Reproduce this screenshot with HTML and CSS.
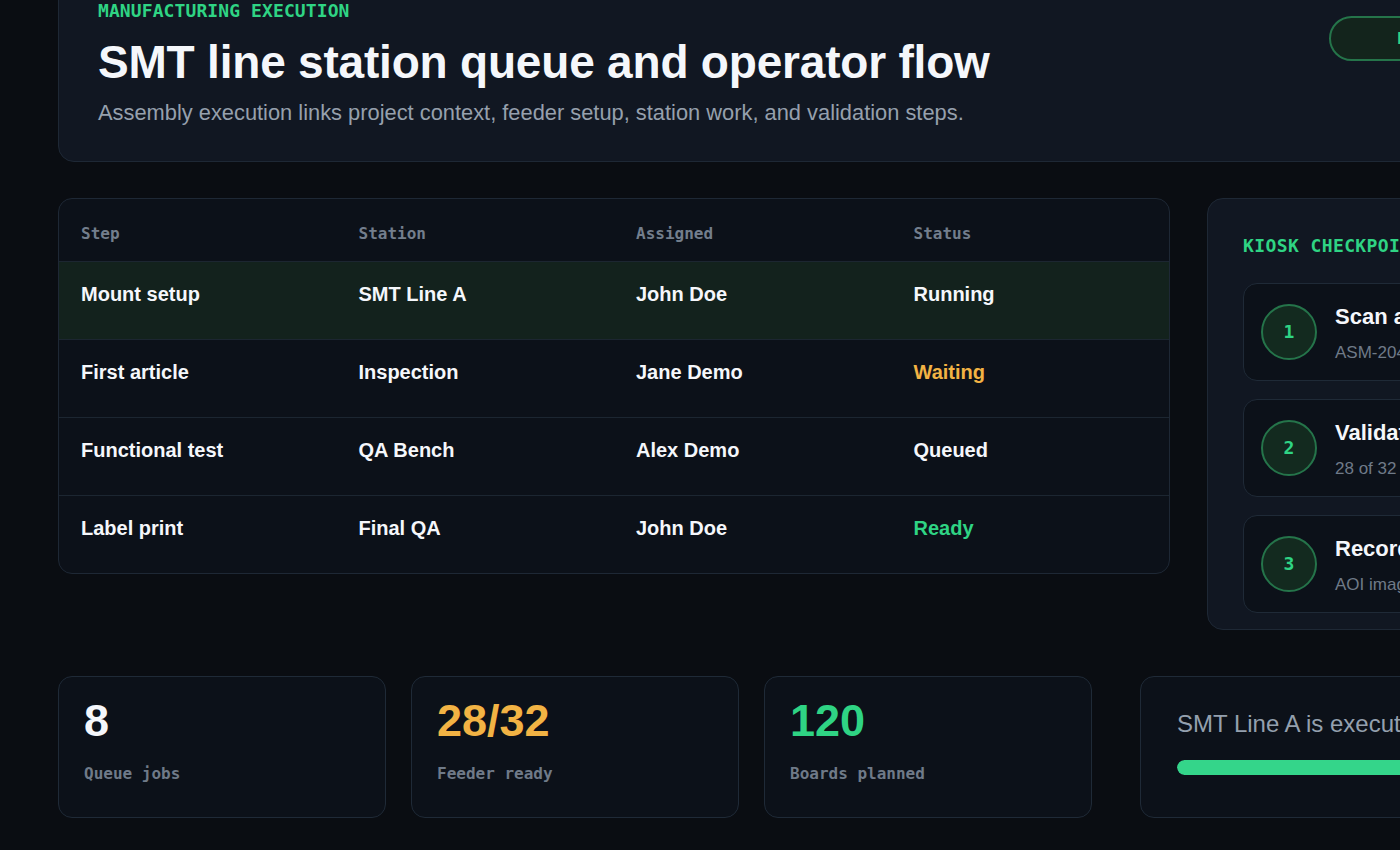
FILE: index.html
```html
<!DOCTYPE html>
<html lang="en">
<head>
<meta charset="utf-8">
<title>SMT line station queue</title>
<link rel="stylesheet" href="styles.css">
</head>
<body>
<div class="page">
  <header class="hero">
    <div class="hero-text">
      <div class="eyebrow">MANUFACTURING EXECUTION</div>
      <h1 class="title">SMT line station queue and operator flow</h1>
      <p class="subtitle">Assembly execution links project context, feeder setup, station work, and validation steps.</p>
    </div>
    <div class="pill">RUNNING</div>
  </header>

  <section class="main">
    <div class="table-card">
      <table class="queue">
        <thead>
          <tr><th>Step</th><th>Station</th><th>Assigned</th><th>Status</th></tr>
        </thead>
        <tbody>
          <tr class="active"><td>Mount setup</td><td>SMT Line A</td><td>John Doe</td><td>Running</td></tr>
          <tr><td>First article</td><td>Inspection</td><td>Jane Demo</td><td class="warn">Waiting</td></tr>
          <tr><td>Functional test</td><td>QA Bench</td><td>Alex Demo</td><td>Queued</td></tr>
          <tr><td>Label print</td><td>Final QA</td><td>John Doe</td><td class="ok">Ready</td></tr>
        </tbody>
      </table>
    </div>

    <aside class="kiosk">
      <div class="kiosk-title">KIOSK CHECKPOINTS</div>
      <div class="checks">
        <div class="check">
          <div class="num">1</div>
          <div class="check-text">
            <div class="check-title">Scan assembly traveler</div>
            <div class="check-sub">ASM-2041 · Rev C</div>
          </div>
        </div>
        <div class="check">
          <div class="num">2</div>
          <div class="check-text">
            <div class="check-title">Validate feeders</div>
            <div class="check-sub">28 of 32 confirmed</div>
          </div>
        </div>
        <div class="check">
          <div class="num">3</div>
          <div class="check-text">
            <div class="check-title">Record inspection</div>
            <div class="check-sub">AOI image required</div>
          </div>
        </div>
      </div>
    </aside>
  </section>

  <section class="bottom">
    <div class="stats">
      <div class="stat">
        <div class="stat-value">8</div>
        <div class="stat-label">Queue jobs</div>
      </div>
      <div class="stat">
        <div class="stat-value amber">28/32</div>
        <div class="stat-label">Feeder ready</div>
      </div>
      <div class="stat">
        <div class="stat-value green">120</div>
        <div class="stat-label">Boards planned</div>
      </div>
    </div>
    <div class="progress-card">
      <div class="progress-text">SMT Line A is executing</div>
      <div class="track"><div class="fill" style="width: 78%"></div></div>
    </div>
  </section>
</div>
</body>
</html>
```

FILE: styles.css
```css
html, body {
  margin: 0;
  padding: 0;
  overflow: hidden;
  background: #0a0d12;
}

body {
  font-family: "Liberation Sans", Arial, sans-serif;
  color: #f5f7fb;
}

.page {
  width: 1512px;
  margin-top: -40px;
  padding-left: 58px;
  display: flex;
  flex-direction: column;
}

/* Hero */
.hero {
  background: #111722;
  border: 1px solid #1e2835;
  border-radius: 16px;
  padding: 39px 40px 33px 39px;
  display: flex;
  justify-content: space-between;
  align-items: flex-start;
}

.eyebrow {
  font-family: "DejaVu Sans Mono", monospace;
  font-weight: 700;
  font-size: 18px;
  line-height: 21.6px;
  letter-spacing: 0.1px;
  color: #2fd484;
}

.title {
  margin: 15px 0 11px;
  font-size: 46px;
  line-height: 50.6px;
  font-weight: 700;
  letter-spacing: -0.2px;
  color: #f5f7fb;
}

.subtitle {
  margin: 0;
  font-size: 21.85px;
  line-height: 30px;
  color: #96a0ad;
}

.pill {
  margin-top: 16px;
  height: 45px;
  box-sizing: border-box;
  min-width: 200px;
  padding-left: 4px;
  border: 2px solid #25744a;
  background: #13241c;
  border-radius: 999px;
  display: flex;
  align-items: center;
  justify-content: center;
  font-family: "DejaVu Sans Mono", monospace;
  font-weight: 700;
  font-size: 16px;
  color: #2fd484;
}

/* Main grid */
.main {
  margin-top: 36px;
  display: grid;
  grid-template-columns: 1112px 363px;
  column-gap: 37px;
  align-items: start;
}

.table-card {
  background: #0c1119;
  border: 1px solid #1e2835;
  border-radius: 14px;
  overflow: hidden;
}

.queue {
  width: 100%;
  border-collapse: collapse;
  table-layout: fixed;
}

.queue th {
  height: 62px;
  box-sizing: border-box;
  padding: 8px 22px 0;
  text-align: left;
  font-family: "DejaVu Sans Mono", monospace;
  font-weight: 700;
  font-size: 16px;
  color: #737e8c;
  border-bottom: 1px solid #1c2631;
}

.queue td {
  height: 78px;
  box-sizing: border-box;
  padding: 17px 22px 0;
  vertical-align: top;
  font-size: 20px;
  line-height: 30px;
  font-weight: 700;
  color: #f5f7fb;
  border-bottom: 1px solid #1c2631;
}

.queue tbody tr:last-child td {
  border-bottom: none;
}

.queue tr.active td {
  background: #13221d;
}

.queue td.warn { color: #f2b344; }
.queue td.ok { color: #2fd484; }

/* Kiosk */
.kiosk {
  background: #111722;
  border: 1px solid #1e2835;
  border-radius: 16px;
  padding: 36px 35px 16px;
}

.kiosk-title {
  font-family: "DejaVu Sans Mono", monospace;
  font-weight: 700;
  font-size: 18px;
  line-height: 21.6px;
  letter-spacing: 0.4px;
  color: #2fd484;
  white-space: nowrap;
}

.checks {
  margin-top: 26px;
  display: flex;
  flex-direction: column;
  gap: 18px;
}

.check {
  height: 98px;
  box-sizing: border-box;
  background: #0c1119;
  border: 1px solid #1f2a37;
  border-radius: 14px;
  padding: 0 17px;
  display: flex;
  align-items: center;
  gap: 18px;
}

.num {
  flex: none;
  width: 56px;
  height: 56px;
  box-sizing: border-box;
  border-radius: 50%;
  border: 2px solid #25744a;
  background: #132a1f;
  display: flex;
  align-items: center;
  justify-content: center;
  font-family: "DejaVu Sans Mono", monospace;
  font-weight: 700;
  font-size: 18px;
  color: #2fd484;
}

.check-text {
  min-width: 0;
  white-space: nowrap;
  padding-top: 4px;
}

.check-title {
  font-size: 22px;
  line-height: 28.6px;
  font-weight: 700;
  color: #f5f7fb;
  margin-bottom: 9px;
}

.check-sub {
  font-size: 17px;
  line-height: 23.8px;
  color: #6f7a88;
}

/* Bottom row */
.bottom {
  margin-top: 46px;
  display: grid;
  grid-template-columns: 1034px 1fr;
  column-gap: 48px;
}

.stats {
  display: grid;
  grid-template-columns: repeat(3, 1fr);
  column-gap: 25px;
}

.stat {
  height: 142px;
  box-sizing: border-box;
  background: #0c1119;
  border: 1px solid #1f2a37;
  border-radius: 14px;
  padding: 21px 25px 0;
}

.stat-value {
  font-size: 45px;
  line-height: 45px;
  font-weight: 700;
  color: #f5f7fb;
}

.stat-value.amber { color: #f2b344; }
.stat-value.green { color: #2fd484; }

.stat-label {
  margin-top: 21px;
  font-family: "DejaVu Sans Mono", monospace;
  font-weight: 700;
  font-size: 16px;
  line-height: 20px;
  color: #6f7a88;
}

.progress-card {
  height: 142px;
  box-sizing: border-box;
  background: #0c1119;
  border: 1px solid #1f2a37;
  border-radius: 14px;
  padding: 32px 36px 0;
}

.progress-text {
  font-size: 24px;
  line-height: 30px;
  color: #94a0ae;
  white-space: nowrap;
}

.track {
  margin-top: 21px;
  height: 15px;
  border-radius: 999px;
  background: #1c2631;
  overflow: hidden;
}

.fill {
  height: 100%;
  border-radius: 999px;
  background: #34d58a;
}
```
